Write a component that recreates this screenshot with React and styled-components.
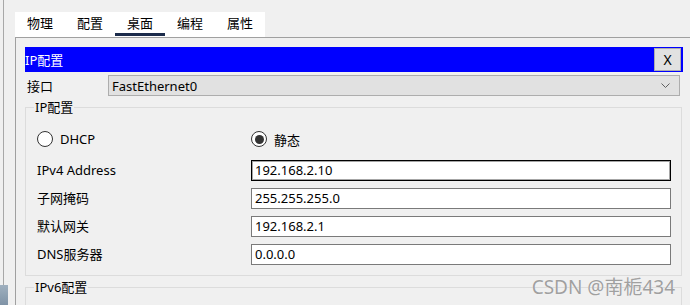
import React from "react";
import styled, { createGlobalStyle } from "styled-components";

const tabs = ["物理", "配置", "桌面", "编程", "属性"];

const fields = [
  { label: "IPv4 Address", value: "192.168.2.10", focused: true },
  { label: "子网掩码", value: "255.255.255.0" },
  { label: "默认网关", value: "192.168.2.1" },
  { label: "DNS服务器", value: "0.0.0.0" },
];

const GlobalStyle = createGlobalStyle`
  html, body {
    margin: 0;
    padding: 0;
    background: #f0f0f0;
    overflow: hidden;
  }
  body {
    font-family: "Noto Sans", "Noto Sans CJK SC", sans-serif;
    font-size: 13px;
    color: #000;
  }
`;

const Screen = styled.div`
  position: relative;
  display: flex;
  width: 690px;
  height: 305px;
  overflow: hidden;
`;

const Edge = styled.div`
  width: 15px;
  flex-shrink: 0;
  display: flex;
  flex-direction: column;
`;

const EdgeLine = styled.div`
  flex: 1;
  width: 1px;
  margin-left: 3px;
  background: #a8a8a8;
`;

const EdgeDesk = styled.div`
  height: 20px;
  width: 8px;
  background: linear-gradient(#9fb0bf, #7f93a6);
`;

const Main = styled.div`
  flex: 1;
  display: flex;
  flex-direction: column;
`;

const TabBar = styled.div`
  display: flex;
  margin-top: 12px;
  width: 250px;
  height: 25px;
  padding-bottom: 1px;
  box-sizing: border-box;
  background: #fff;
`;

const Tab = styled.div`
  width: 50px;
  height: 24px;
  box-sizing: border-box;
  line-height: 21px;
  text-align: center;
  font-family: "Noto Sans CJK SC", sans-serif;
  font-size: 13px;
  border-bottom: 3px solid ${(p) => (p.$active ? "#1b2b4b" : "transparent")};
`;

const Panel = styled.div`
  flex: 1;
  border-top: 1px solid #a0a0a0;
  border-left: 1px solid #a0a0a0;
  padding: 9px 0 0 9px;
`;

const TitleBar = styled.div`
  display: flex;
  align-items: center;
  justify-content: space-between;
  width: 658px;
  height: 25px;
  background: #0000ff;
  color: #fff;
  font-family: "Noto Sans", "Noto Sans CJK SC", sans-serif;
`;

const CloseButton = styled.div`
  width: 27px;
  height: 23px;
  box-sizing: border-box;
  margin-right: 2px;
  border: 1px solid #adadad;
  background: #e1e1e1;
  color: #000;
  font-size: 14px;
  display: flex;
  align-items: center;
  justify-content: center;
`;

const InterfaceRow = styled.div`
  display: flex;
  align-items: center;
  height: 21px;
  margin-top: 3px;
`;

const RowLabel = styled.div`
  width: 83px;
  padding-left: 2px;
  box-sizing: border-box;
`;

const Select = styled.div`
  width: 572px;
  height: 21px;
  box-sizing: border-box;
  border: 1px solid #adadad;
  background: #e1e1e1;
  padding: 0 9px 0 3px;
  display: flex;
  align-items: center;
  justify-content: space-between;
`;

const Group = styled.fieldset`
  margin: 3px 0 0 0;
  width: 657px;
  box-sizing: border-box;
  border: 1px solid #dcdcdc;
  padding: 15px 10px ${(p) => (p.$open ? "40px" : "10px")} 11px;
`;

const Legend = styled.legend`
  padding: 0 1px;
  margin-left: -3px;
  line-height: 16px;
`;

const Grid = styled.div`
  display: grid;
  grid-template-columns: 214px 420px;
  row-gap: 7px;
  align-items: center;
`;

const RadioOption = styled.div`
  display: flex;
  align-items: center;
  gap: 7px;
  height: 18px;
  margin-bottom: 5px;
`;

const RadioDot = styled.span`
  width: 16px;
  height: 16px;
  box-sizing: border-box;
  border-radius: 50%;
  border: 1px solid #333;
  background: #fff;
  display: flex;
  align-items: center;
  justify-content: center;
  &::after {
    content: "";
    width: 9px;
    height: 9px;
    border-radius: 50%;
    background: ${(p) => (p.$checked ? "#333" : "transparent")};
  }
`;

const FieldLabel = styled.div`
  line-height: 21px;
`;

const Input = styled.div`
  height: 21px;
  box-sizing: border-box;
  border: 1px solid ${(p) => (p.$focused ? "#000" : "#7a7a7a")};
  box-shadow: ${(p) => (p.$focused ? "inset 0 0 0 1px rgba(0,0,0,0.35)" : "none")};
  background: #fff;
  padding-left: 3px;
  line-height: 19px;
`;

const Watermark = styled.div`
  position: absolute;
  right: 15px;
  bottom: 5px;
  font-family: "Noto Sans", "Noto Sans CJK SC", sans-serif;
  font-size: 19px;
  color: #a0a0a0;
  text-shadow: 0 0 1px #fff;
`;

function Chevron() {
  return (
    <svg width="9" height="5" viewBox="0 0 9 5">
      <path d="M0.5 0.5 L4.5 4.5 L8.5 0.5" fill="none" stroke="#606060" strokeWidth="1" />
    </svg>
  );
}

export default function App() {
  return (
    <Screen>
      <GlobalStyle />
      <Edge>
        <EdgeLine />
        <EdgeDesk />
      </Edge>
      <Main>
        <TabBar>
          {tabs.map((t, i) => (
            <Tab key={t} $active={i === 2}>{t}</Tab>
          ))}
        </TabBar>
        <Panel>
          <TitleBar>
            <span>IP配置</span>
            <CloseButton>X</CloseButton>
          </TitleBar>
          <InterfaceRow>
            <RowLabel>接口</RowLabel>
            <Select>
              <span>FastEthernet0</span>
              <Chevron />
            </Select>
          </InterfaceRow>
          <Group>
            <Legend>IP配置</Legend>
            <Grid>
              <RadioOption>
                <RadioDot />
                <span>DHCP</span>
              </RadioOption>
              <RadioOption>
                <RadioDot $checked />
                <span>静态</span>
              </RadioOption>
              {fields.map((f) => (
                <React.Fragment key={f.label}>
                  <FieldLabel>{f.label}</FieldLabel>
                  <Input $focused={f.focused}>{f.value}</Input>
                </React.Fragment>
              ))}
            </Grid>
          </Group>
          <Group $open>
            <Legend>IPv6配置</Legend>
          </Group>
        </Panel>
      </Main>
      <Watermark>CSDN @南栀434</Watermark>
    </Screen>
  );
}
